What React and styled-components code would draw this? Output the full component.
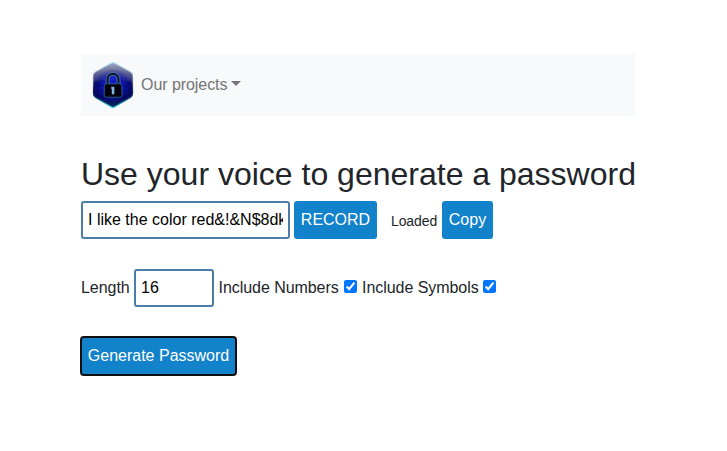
import React from "react";
import styled, { createGlobalStyle } from "styled-components";

const GlobalStyle = createGlobalStyle`
  *, *::before, *::after { box-sizing: border-box; }
  body {
    margin: 0;
    background: #fff;
    color: #212529;
    font: 16px/24px "Liberation Sans", Arial, sans-serif;
  }
`;

const Page = styled.main`
  width: 554px;
  margin-left: 81px;
  padding-top: 54px;
`;

const Navbar = styled.nav`
  display: flex;
  align-items: center;
  height: 62px;
  padding-left: 11px;
  background: #f8f9fa;
`;

const Logo = styled.svg`
  width: 42px;
  height: 48px;
  flex: none;
`;

const NavLink = styled.a`
  display: flex;
  align-items: center;
  gap: 4px;
  margin-left: 7px;
  color: #747576;
  letter-spacing: -0.06px;
  white-space: nowrap;
  &::after {
    content: "";
    margin-bottom: 3px;
    border-top: 5px solid;
    border-left: 5px solid transparent;
    border-right: 5px solid transparent;
  }
`;

const Title = styled.h1`
  margin: 38px 0 7px;
  font-size: 32px;
  font-weight: 400;
  line-height: 40px;
  white-space: nowrap;
`;

const Row = styled.div`
  display: flex;
  align-items: center;
  height: 38px;
  margin-bottom: 30px;
  white-space: nowrap;
`;

const Field = styled.input`
  width: ${(p) => p.$width}px;
  height: 38px;
  margin: 0 ${(p) => p.$after}px 0 0;
  padding: 0 5px;
  border: 2px solid #4a7dab;
  border-radius: 3px;
  background: #fff;
  color: #000;
  font: inherit;
  outline: none;
`;

const Button = styled.button`
  width: ${(p) => p.$width}px;
  height: 38px;
  padding: 0 0 1px;
  border: 0;
  border-radius: 3px;
  background: #1282cb;
  color: #fff;
  font: inherit;
  outline: ${(p) => (p.$focused ? "2px solid #101010" : "none")};
  outline-offset: -1px;
`;

const Status = styled.span`
  width: 46px;
  margin: 1px 5px 0 14px;
  font-size: 14px;
  letter-spacing: -0.1px;
`;

const Label = styled.label`
  width: ${(p) => p.$width}px;
  padding-bottom: 1px;
  letter-spacing: -0.05px;
`;

const Checkbox = styled.input.attrs({ type: "checkbox", defaultChecked: true })`
  width: 13px;
  height: 13px;
  margin: 0 5px 3px 0;
  accent-color: #0075ff;
`;

function LockLogo() {
  return (
    <Logo viewBox="0 0 42 48" aria-label="Password generator">
      <defs>
        <linearGradient id="face" x1="0" y1="0" x2="0" y2="1">
          <stop offset="0" stopColor="#a3a9c4" />
          <stop offset="0.2" stopColor="#686e98" />
          <stop offset="0.4" stopColor="#303586" />
          <stop offset="0.45" stopColor="#070b6c" />
          <stop offset="0.8" stopColor="#05095e" />
          <stop offset="1" stopColor="#07305a" />
        </linearGradient>
        <radialGradient id="glow">
          <stop offset="0" stopColor="#1722ff" />
          <stop offset="0.55" stopColor="#0e18ce" stopOpacity="0.75" />
          <stop offset="1" stopColor="#0710a0" stopOpacity="0" />
        </radialGradient>
        <linearGradient id="rim" x1="0" y1="0" x2="0" y2="1">
          <stop offset="0" stopColor="#a9e5ee" />
          <stop offset="0.3" stopColor="#858ca0" />
          <stop offset="0.65" stopColor="#091a4c" />
          <stop offset="1" stopColor="#36d2e6" />
        </linearGradient>
      </defs>
      <path
        d="M19 2.3Q21 1 23 2.3L38.5 11.3Q40.5 12.5 40.5 15V33Q40.5 35.3 38.5 36.5L23 45.7Q21 47 19 45.7L3.5 36.5Q1.5 35.3 1.5 33V15Q1.5 12.5 3.5 11.3Z"
        fill="url(#face)"
        stroke="url(#rim)"
        strokeWidth="1.2"
      />
      <ellipse cx="21" cy="25" rx="19" ry="17" fill="url(#glow)" />
      <path
        d="M3 20H39M3 25H39M3 30H39M3 35H39M8 16V20M34 16V20M6 20V25M36 20V25M9 25V30M33 25V30M6 30V35M36 30V35M15 35V40M27 35V40"
        stroke="#050847"
        strokeWidth="0.8"
        opacity="0.55"
      />
      <path d="M15.5 24V18.5C15.5 11 26.5 11 26.5 18.5V24" fill="none" stroke="#567da4" strokeWidth="3.8" />
      <path d="M15.5 24V18.5C15.5 11 26.5 11 26.5 18.5V24" fill="none" stroke="#0a1437" strokeWidth="2.1" />
      <rect x="12.3" y="22.8" width="17.6" height="13.4" rx="2" fill="#02030e" stroke="#315c89" strokeWidth="0.9" />
      <path d="M19.3 25.8H22.3V33.2H19.8V28H19.3Z" fill="#83b9df" />
    </Logo>
  );
}

export default function App() {
  return (
    <>
      <GlobalStyle />
      <Page>
        <Navbar>
          <LockLogo />
          <NavLink>Our projects</NavLink>
        </Navbar>
        <Title>Use your voice to generate a password</Title>
        <Row>
          <Field $width={209} $after={4} defaultValue="I like the color red&!&N$8dk" aria-label="Password" />
          <Button $width={83}>RECORD</Button>
          <Status>Loaded</Status>
          <Button $width={51}>Copy</Button>
        </Row>
        <Row>
          <Label $width={53} htmlFor="length">Length</Label>
          <Field $width={80} $after={4.5} id="length" defaultValue="16" />
          <Label $width={125.5} htmlFor="numbers">Include Numbers</Label>
          <Checkbox id="numbers" />
          <Label $width={121} htmlFor="symbols">Include Symbols</Label>
          <Checkbox id="symbols" />
        </Row>
        <Row>
          <Button $width={155} $focused>Generate Password</Button>
        </Row>
      </Page>
    </>
  );
}
